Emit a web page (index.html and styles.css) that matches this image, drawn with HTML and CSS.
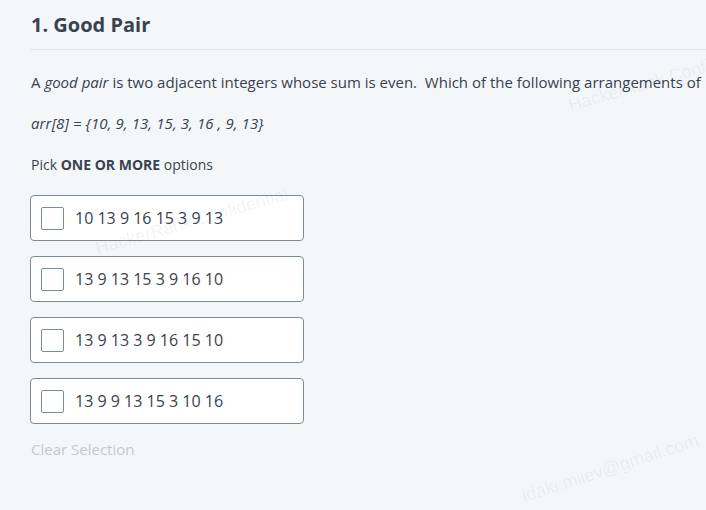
FILE: index.html
```html
<!DOCTYPE html>
<html>
<head>
<meta charset="utf-8">
<link rel="stylesheet" href="styles.css">
</head>
<body>
<div class="page">
  <h1 class="title">1. Good Pair</h1>
  <div class="rule"></div>
  <p class="stmt">A <em>good pair</em> is two adjacent integers whose sum is even.&nbsp; Which of the following arrangements of</p>
  <p class="arr"><em>arr[8] = {10, 9, 13, 15, 3, 16 , 9, 13}</em></p>
  <p class="pick">Pick <strong>ONE OR MORE</strong> options</p>
  <div class="options">
    <label class="opt"><span class="box"></span><span class="txt">10 13 9 16 15 3 9 13</span></label>
    <label class="opt"><span class="box"></span><span class="txt">13 9 13 15 3 9 16 10</span></label>
    <label class="opt"><span class="box"></span><span class="txt">13 9 13 3 9 16 15 10</span></label>
    <label class="opt"><span class="box"></span><span class="txt">13 9 9 13 15 3 10 16</span></label>
  </div>
  <div class="clear">Clear Selection</div>
</div>
<div class="wm wm1">HackerRank Confidential</div>
<div class="wm wm2">HackerRank Confidential</div>
<div class="wm wm3">idaki.milev@gmail.com</div>
</body>
</html>
```
FILE: styles.css
```css
html, body {
  margin: 0;
  padding: 0;
  background: #f3f7f9;
  overflow: hidden;
  width: 706px;
  height: 510px;
}
body {
  position: relative;
  font-family: "Open Sans", "Liberation Sans", sans-serif;
  color: #39424e;
}
.page {
  padding: 11px 0 0 30px;
}
.title {
  margin: 0 0 0 1px;
  font-size: 20px;
  font-weight: 700;
  line-height: 28px;
  color: #39424e;
}
.rule {
  margin-top: 10px;
  height: 1px;
  background: #e3e8eb;
}
.stmt {
  margin: 22px 0 0 1px;
  font-size: 15px;
  line-height: 20px;
  white-space: nowrap;
}
.arr {
  margin: 21px 0 0 1px;
  font-size: 15px;
  line-height: 20px;
  letter-spacing: 0.1px;
}
.pick {
  margin: 22px 0 0 1px;
  font-size: 14px;
  line-height: 20px;
}
.pick strong { font-weight: 700; }
.options {
  margin-top: 20px;
  display: flex;
  flex-direction: column;
  gap: 15px;
  width: 274px;
}
.opt {
  display: flex;
  align-items: center;
  height: 44px;
  background: #fff;
  border: 1px solid #7b8c95;
  border-radius: 4px;
  padding-left: 10px;
  gap: 11px;
}
.box {
  width: 21px;
  height: 21px;
  border: 1px solid #7b8c95;
  border-radius: 2px;
  background: #fff;
  flex: none;
}
.txt {
  font-size: 16px;
  line-height: 22px;
  margin-top: -1px;
}
.clear {
  margin: 15px 0 0 1px;
  font-size: 15px;
  line-height: 20px;
  color: #c4cacf;
}
.wm {
  position: absolute;
  font-family: "Liberation Sans", Arial, sans-serif;
  color: rgba(57, 66, 78, 0.065);
  white-space: nowrap;
  transform-origin: 0 100%;
  pointer-events: none;
}
.wm1 {
  left: 99px;
  top: 238px;
  font-size: 18px;
  transform: rotate(-16deg);
}
.wm2 {
  left: 572px;
  top: 95px;
  font-size: 18px;
  transform: rotate(-16deg);
}
.wm3 {
  left: 526px;
  top: 486px;
  font-size: 18px;
  transform: rotate(-18deg);
}
```
